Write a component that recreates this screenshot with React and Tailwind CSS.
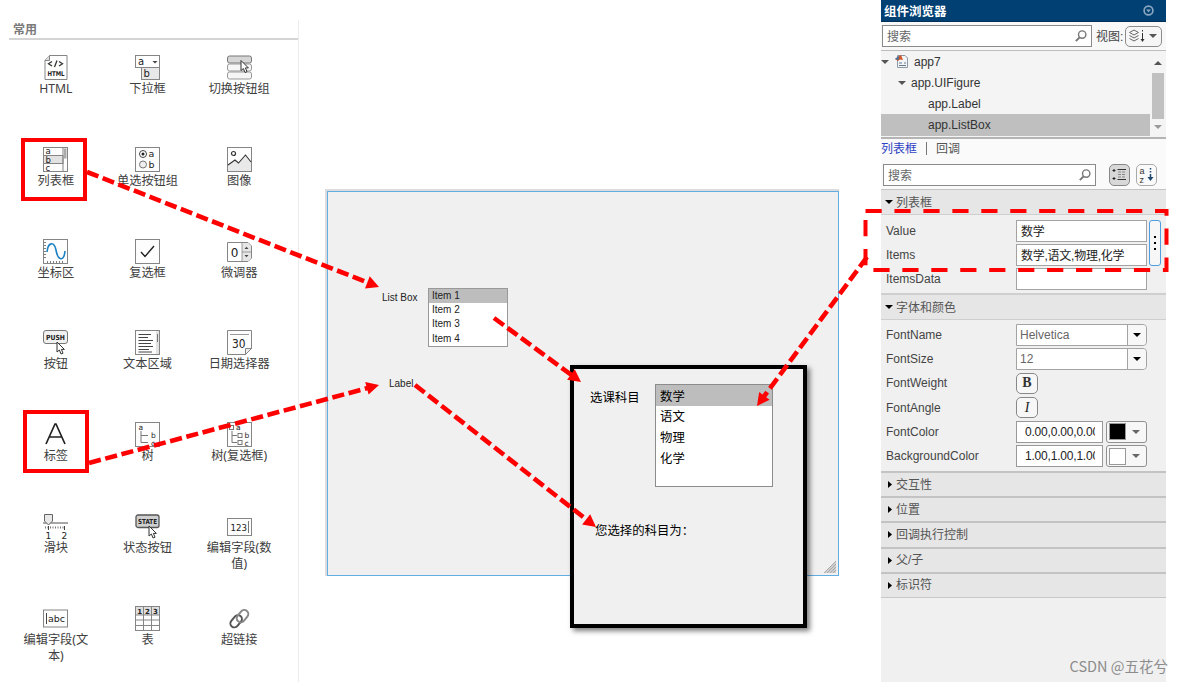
import React from 'react';

const Frame = ({ y = 0.5, h = 24 }) => (
    <rect x="0.5" y={y} width="24" height={h} fill="#fdfdfd" stroke="#858585" />
);

const Cursor = ({ x, y }) => (
    <path
        transform={`translate(${x} ${y})`}
        d="M0 0 V10 L2.4 8 L4 12 L6 11.2 L4.4 7.4 H7.4 Z"
        fill="#fff"
        stroke="#333"
        strokeWidth="1"
    />
);

const icons = {
    html: (
        <>
            <path d="M6.5 0.5 H24 V24.5 H2 V5.5 Z" fill="#fff" stroke="#858585" />
            <path d="M6.5 0.5 V5.5 H2" fill="#ddd" stroke="#858585" />
            <path d="M9 6.5 L5.5 8.8 L9 11 M16 6.5 L19.5 8.8 L16 11 M14 5.5 L11.5 12" fill="none" stroke="#333" strokeWidth="1.3" />
            <text x="4.5" y="21" fontSize="6.5" fontWeight="bold" textLength="17" lengthAdjust="spacingAndGlyphs">HTML</text>
        </>
    ),
    dropdown: (
        <>
            <rect x="0.5" y="0.5" width="24" height="12" fill="#fff" stroke="#858585" />
            <rect x="6.5" y="12.5" width="18" height="12" fill="#e8e8e8" stroke="#858585" />
            <text x="3" y="9.5" fontSize="10">a</text>
            <path d="M17.5 6 h5 l-2.5 2.5 Z" fill="#444" />
            <text x="8.5" y="22.3" fontSize="10">b</text>
        </>
    ),
    toggle: (
        <>
            <rect x="0.5" y="1" width="24" height="7" rx="2" fill="#d6d6d6" stroke="#777" />
            <rect x="0.5" y="9" width="24" height="7" rx="2" fill="#f6f6f6" stroke="#999" />
            <rect x="0.5" y="17" width="24" height="7" rx="2" fill="#f6f6f6" stroke="#999" />
            <Cursor x={14} y={5.5} />
        </>
    ),
    listbox: (
        <>
            <Frame />
            <rect x="0.5" y="8.5" width="19.5" height="8" fill="#e2e2e2" stroke="#858585" />
            <path d="M20 0.5 V24.5" stroke="#858585" />
            <rect x="21" y="1.5" width="2.5" height="10" fill="#aaa" />
            <g fontSize="8.5">
                <text x="2.5" y="7">a</text>
                <text x="2.5" y="15.7">b</text>
                <text x="2.5" y="23.7">c</text>
            </g>
        </>
    ),
    radio: (
        <>
            <Frame />
            <circle cx="8" cy="7" r="3.5" fill="#fff" stroke="#444" />
            <circle cx="8" cy="7" r="1.5" fill="#222" />
            <circle cx="8" cy="17.5" r="3.5" fill="#eee" stroke="#777" />
            <text x="13.5" y="10" fontSize="9.5">a</text>
            <text x="13.5" y="21" fontSize="9.5">b</text>
        </>
    ),
    image: (
        <>
            <Frame />
            <path d="M1 18 L8 13 L11.5 16 L18.5 8 L24 15 V24 H1 Z" fill="#e9e9e9" />
            <path d="M1 18 L8 13 L11.5 16 L18.5 8 L24 15" fill="none" stroke="#333" strokeWidth="1.1" />
            <circle cx="6.5" cy="6.5" r="2" fill="none" stroke="#333" strokeWidth="1.2" />
        </>
    ),
    axes: (
        <>
            <Frame />
            <path d="M2 3 V21" stroke="#555" strokeDasharray="1 2" strokeWidth="1.5" />
            <path d="M4 23 H22" stroke="#555" strokeDasharray="1 2" strokeWidth="1.5" />
            <path d="M4 13 C5 3 11 2 13 11 C15 22 21 23 22 12" fill="none" stroke="#1c82c4" strokeWidth="1.6" />
        </>
    ),
    checkbox: (
        <>
            <Frame />
            <path d="M6 13 L10 17.5 L19 7" fill="none" stroke="#222" strokeWidth="1.4" />
        </>
    ),
    spinner: (
        <>
            <path d="M0.5 3.5 H21 L24.5 7 V19 L21 22.5 H0.5 Z" fill="#fff" stroke="#858585" />
            <path d="M15 4 H21 L24 7 V19 L21 22 H15 Z" fill="#e6e6e6" />
            <path d="M15 4 V22 M15 13 H24" stroke="#858585" strokeWidth="0.8" />
            <text x="3.7" y="17.5" fontSize="12">0</text>
            <path d="M17.5 10 h4 l-2 -2.3 Z M17.5 16 h4 l-2 2.3 Z" fill="#444" />
        </>
    ),
    push: (
        <>
            <rect x="0.5" y="0.5" width="24" height="13" rx="2.5" fill="#f0f0f0" stroke="#777" />
            <text x="3" y="10" fontSize="7" fontWeight="bold" textLength="19" lengthAdjust="spacingAndGlyphs">PUSH</text>
            <Cursor x={14} y={12} />
        </>
    ),
    textarea: (
        <>
            <Frame />
            <path d="M3.5 4.5 H16 M3.5 7.5 H13 M3.5 10.5 H18 M3.5 13.5 H16 M3.5 16.5 H18 M3.5 19.5 H14 M3.5 22 H17" stroke="#444" />
            <rect x="21" y="1" width="3" height="23" fill="#e2e2e2" />
            <path d="M22.5 4 V12" stroke="#777" />
        </>
    ),
    date: (
        <>
            <path d="M0.5 0.5 H24.5 V18.5 L18.5 24.5 H0.5 Z" fill="#fdfdfd" stroke="#858585" />
            <path d="M18.5 24.5 V18.5 H24.5 Z" fill="#eee" stroke="#858585" />
            <path d="M3 4.5 H22" stroke="#999" />
            <text x="5" y="18" fontSize="12" textLength="13.5" lengthAdjust="spacingAndGlyphs">30</text>
        </>
    ),
    label: <path d="M3 22 L12 2 H13 L22 22 M6.5 15 H18.5" fill="none" stroke="#222" strokeWidth="1.7" />,
    tree: (
        <>
            <Frame />
            <path d="M6 9 V20.5 H13 M6 13.5 H13" fill="none" stroke="#777" />
            <g fontSize="7.5">
                <text x="3.5" y="7.5">a</text>
                <text x="16" y="15.5">b</text>
                <text x="16" y="23.6">c</text>
            </g>
        </>
    ),
    checktree: (
        <>
            <Frame />
            <path d="M5 9 V20.5 H10 M5 13.5 H10" fill="none" stroke="#777" />
            <g fill="#fff" stroke="#777">
                <rect x="2.5" y="3.5" width="4" height="4" />
                <rect x="11" y="11.5" width="4" height="4" />
                <rect x="11" y="18.5" width="4" height="4" />
            </g>
            <g fontSize="7.5">
                <text x="9" y="7.5">a</text>
                <text x="17.5" y="15.5">b</text>
                <text x="17.5" y="23.6">c</text>
            </g>
        </>
    ),
    slider: (
        <>
            <path d="M0 9 H25" stroke="#777" strokeWidth="1.3" />
            <path d="M1.5 0.5 H9.5 V7 L5.5 11 L1.5 7 Z" fill="#e8e8e8" stroke="#666" />
            <path d="M2 13.5 H22" stroke="#777" strokeDasharray="1 1.5" strokeWidth="2" />
            <path d="M5.5 12 V16 M21.5 12 V16" stroke="#444" />
            <text x="2.5" y="24.5" fontSize="9">1</text>
            <text x="18.5" y="24.5" fontSize="9">2</text>
        </>
    ),
    state: (
        <>
            <rect x="1" y="1" width="23" height="12.5" rx="2" fill="#cfcfcf" stroke="#555" strokeWidth="1.3" />
            <text x="3" y="10" fontSize="7" fontWeight="bold" textLength="19" lengthAdjust="spacingAndGlyphs">STATE</text>
            <Cursor x={14} y={12} />
        </>
    ),
    numeric: (
        <>
            <Frame y={4.5} h={17} />
            <text x="3.5" y="16.5" fontSize="9.5" textLength="16.5" lengthAdjust="spacingAndGlyphs">123</text>
            <path d="M21.5 7 V19" stroke="#777" />
        </>
    ),
    textfield: (
        <>
            <Frame y={4} h={17} />
            <path d="M3.5 7 V18" stroke="#444" />
            <text x="5" y="16" fontSize="9.5" textLength="17" lengthAdjust="spacingAndGlyphs">abc</text>
        </>
    ),
    table: (
        <>
            <Frame />
            <rect x="1" y="1" width="23" height="8" fill="#dedede" />
            <path d="M8.5 0.5 V24.5 M16.5 0.5 V24.5 M0.5 9 H24.5 M0.5 14 H24.5 M0.5 19.5 H24.5" stroke="#858585" />
            <g fontSize="7" fontWeight="bold">
                <text x="2.2" y="7.5">1</text>
                <text x="10" y="7.5">2</text>
                <text x="18" y="7.5">3</text>
            </g>
        </>
    ),
    link: (
        <g fill="none" strokeWidth="2" transform="rotate(-50 12.5 12.5)">
            <rect x="1.5" y="7.7" width="13.5" height="8" rx="4" stroke="#555" />
            <rect x="9.5" y="9.3" width="13.5" height="8" rx="4" stroke="#888" />
        </g>
    ),
};

const components = [
    ['html', 'HTML'], ['dropdown', '下拉框'], ['toggle', '切换按钮组'],
    ['listbox', '列表框'], ['radio', '单选按钮组'], ['image', '图像'],
    ['axes', '坐标区'], ['checkbox', '复选框'], ['spinner', '微调器'],
    ['push', '按钮'], ['textarea', '文本区域'], ['date', '日期选择器'],
    ['label', '标签'], ['tree', '树'], ['checktree', '树(复选框)'],
    ['slider', '滑块'], ['state', '状态按钮'], ['numeric', '编辑字段(数值)'],
    ['textfield', '编辑字段(文本)'], ['table', '表'], ['link', '超链接'],
];

const Palette = () => (
    <aside className="mt-5 w-[299px] shrink-0 border-r border-[#ececec]">
        <h2 className="ml-[9px] h-5 border-b-2 border-[#d4d4d4] pt-px pl-1 text-xs leading-[19px] font-bold text-[#7a7a7a]">常用</h2>
        <div className="ml-[10px] grid w-[275px] auto-rows-[91.8px] grid-cols-3 pt-[15px]">
            {components.map(([icon, name]) => (
                <div key={icon} className="flex flex-col items-center">
                    <svg className="h-[25px] w-[25px] shrink-0 overflow-visible font-['DejaVu_Sans',sans-serif]" viewBox="0 0 25 25" fill="#222">{icons[icon]}</svg>
                    <span className="mt-px w-[70px] text-center font-['Noto_Sans','Noto_Sans_CJK_SC',sans-serif] text-[12.2px] leading-[16.5px] text-[#404040]">{name}</span>
                </div>
            ))}
        </div>
    </aside>
);

const DesignCanvas = () => (
    <main className="relative flex-1">
        <div className="absolute top-[189px] left-[26px] h-[387px] w-[514px] border-t-2 border-l-2 border-[#dcdcdc]">
            <div className="relative h-full w-full border border-[#62aee4] bg-[#f0f0f0] text-[10px] text-[#222]">
                <span className="absolute top-[99px] left-[54px] leading-[14px]">List Box</span>
                <ul className="absolute top-[96px] left-[100px] h-[59px] w-[80px] border border-[#999] bg-white leading-[14.2px]">
                    <li className="bg-[#bdbdbd] pl-[3px]">Item 1</li>
                    <li className="pl-[3px]">Item 2</li>
                    <li className="pl-[3px]">Item 3</li>
                    <li className="pl-[3px]">Item 4</li>
                </ul>
                <span className="absolute top-[185px] left-[61px] leading-[14px]">Label</span>
                <svg className="absolute right-[2px] bottom-[2px] h-3 w-3" viewBox="0 0 12 12">
                    <path d="M12 0 V12 H0 Z" fill="#d0d0d0" />
                    <path d="M0 12 L12 0 M3 12 L12 3 M6 12 L12 6 M9 12 L12 9" stroke="#a8a8a8" />
                </svg>
            </div>
        </div>
        <div className="absolute top-[365px] left-[271px] h-[263px] w-[237px] border-4 border-black bg-[#f0f0f0] text-[12.4px] text-black shadow-[3px_3px_5px_rgba(0,0,0,0.5)]">
            <span className="absolute top-5 left-4 leading-[18px]">选课科目</span>
            <ul className="absolute top-[15px] left-[81px] h-[103px] w-[118px] border border-[#8c8c8c] bg-white leading-[18px]">
                <li className="bg-[#bdbdbd] pt-[2.7px] pl-1">数学</li>
                <li className="pt-[2.7px] pl-1">语文</li>
                <li className="pt-[2.7px] pl-1">物理</li>
                <li className="pt-[2.7px] pl-1">化学</li>
            </ul>
            <span className="absolute top-[153px] left-[21px] leading-[18px] whitespace-nowrap">您选择的科目为：</span>
        </div>
    </main>
);

const Caret = ({ className = '' }) => (
    <svg className={`h-1 w-2 shrink-0 ${className}`} viewBox="0 0 8 4" fill="currentColor"><path d="M0 0 H8 L4 4 Z" /></svg>
);

const Magnifier = () => (
    <svg className="h-3 w-3" viewBox="0 0 12 12" fill="none" stroke="#777" strokeWidth="1.4">
        <circle cx="7.2" cy="4.6" r="3.7" />
        <path d="M4.5 7.5 L0.8 11.2" strokeWidth="1.8" />
    </svg>
);

const SearchBox = ({ className }) => (
    <div className={`flex h-[22px] items-center justify-between border border-[#8a8a8a] bg-white pr-1 pl-1 text-xs text-[#666] ${className}`}>
        <span className="pt-[2px]">搜索</span>
        <Magnifier />
    </div>
);

const Row = ({ name, children }) => (
    <div className="flex h-[24.2px] items-center">
        <span className="w-[130px] shrink-0 text-xs text-[#444]">{name}</span>
        {children}
    </div>
);

const Input = ({ children }) => (
    <div className="h-[22px] w-[131px] border border-[#a3a3a3] bg-white pt-px pl-1 text-xs leading-5 tracking-[-0.25px] whitespace-nowrap text-[#222]">{children}</div>
);

const Combo = ({ children }) => (
    <div className="flex h-[22px] w-[131px] items-center rounded-r-[4px] border border-[#a3a3a3] bg-white text-xs">
        <span className="flex-1 pl-[3px] text-[#666]">{children}</span>
        <span className="flex h-full w-[19px] items-center justify-center rounded-r-[4px] border-l border-[#a3a3a3] bg-[#f7f7f7] text-black"><Caret /></span>
    </div>
);

const ColorRow = ({ name, value, swatch }) => (
    <Row name={name}>
        <div className="h-[22px] w-[87px] border border-[#999] bg-white pr-[7px] pl-2 text-xs leading-5 text-[#222]">
            <div className="overflow-hidden tracking-[-0.2px] whitespace-nowrap">{value}</div>
        </div>
        <div className="ml-[3px] flex h-[22px] w-[41px] items-center rounded-[3px] border border-[#909090] bg-[#f7f7f7] pl-[2px] text-[#666]">
            <span className={`h-[17px] w-[17px] border border-[#999] ${swatch}`} />
            <Caret className="ml-[6px]" />
        </div>
    </Row>
);

const OpenHeader = ({ children }) => (
    <div className="flex h-[25px] items-center border-b border-[#cfcfcf] bg-[#e6e6e6] pl-1 text-xs text-[#555]">
        <Caret className="mr-[3px] text-black" />
        <span className="pt-px">{children}</span>
    </div>
);

const closedSections = ['交互性', '位置', '回调执行控制', '父/子', '标识符'];

const Inspector = () => (
    <aside className="mr-[18px] flex w-[285px] shrink-0 flex-col bg-[#f0f0f0]">
        <div className="flex h-[22px] items-center justify-between border-b border-[#003058] bg-[#004073] pr-3 pl-[3px] text-[12.5px] font-bold text-white">
            <span className="pt-[3px]">组件浏览器</span>
            <svg className="h-[11px] w-[11px]" viewBox="0 0 10 10">
                <circle cx="5" cy="5" r="4" fill="none" stroke="#8aa6bf" strokeWidth="1.5" />
                <path d="M2.8 4 H7.2 L5 6.8 Z" fill="#8aa6bf" />
            </svg>
        </div>
        <div className="flex h-[29px] items-center border-b border-[#bdbdbd] bg-[#f8f8f8] pl-px text-xs text-[#444]">
            <SearchBox className="w-[210px]" />
            <span className="ml-1 w-[29px] pt-[2px] whitespace-nowrap">视图:</span>
            <span className="flex h-[21px] w-[37px] items-center rounded-[5px] border border-[#8c8c8c] bg-[#f6f6f6] pl-[3px]">
                <svg className="h-[14px] w-4" viewBox="0 0 16 14" fill="none" stroke="#666">
                    <path d="M0.5 3.5 L5 1 L9.5 3.5 L5 6 Z M0.5 6.5 L5 9 L9.5 6.5 M0.5 9.5 L5 12 L9.5 9.5" />
                    <path d="M13.5 1 V2.5 M13.5 4 V12" stroke="#333" />
                    <path d="M11.5 10 H15.5 L13.5 13 Z" fill="#333" stroke="none" />
                </svg>
                <Caret className="ml-1 text-[#555]" />
            </span>
        </div>
        <div className="flex h-[88px] border-b-2 border-[#b4b4b4] bg-[#f4f4f4] text-xs text-[#333]">
            <div className="w-[269px] leading-[22px]">
                <div className="flex h-[21px] items-center">
                    <Caret className="text-[#555]" />
                    <svg className="mr-[6px] ml-[6px] h-[13px] w-[13px]" viewBox="0 0 13 13">
                        <path d="M2.5 0.5 H10 L12.5 3 V12.5 H2.5 Z" fill="#f3f6f9" stroke="#8b98a5" />
                        <path d="M4 8 H7 M4 10.5 H11 M9 8 H11" stroke="#667888" />
                        <path d="M0 4 L4 1 L6 0 L8 5 L5 4.5 L3 6 Z" fill="#d4552a" />
                        <path d="M0 4 L4 1 L3.5 5 Z" fill="#3777a8" />
                    </svg>
                    app7
                </div>
                <div className="flex h-[21px] items-center pl-[17px]">
                    <Caret className="mr-[5px] text-[#555]" />
                    app.UIFigure
                </div>
                <div className="h-[21px] pl-[47px]">app.Label</div>
                <div className="h-[22px] bg-[#bfbfbf] pl-[47px]">app.ListBox</div>
            </div>
            <div className="flex flex-1 flex-col items-center pt-[10px] text-[#555]">
                <Caret className="rotate-180" />
                <div className="mt-[8px] h-[46px] w-3 bg-[#c0c0c0]" />
                <Caret className="mt-[6px] text-[#999]" />
            </div>
        </div>
        <div className="flex h-[21px] items-center bg-[#fafafa] pb-[2px] text-xs text-[#555]">
            <span className="text-[#2e43c4]">列表框</span>
            <span className="mx-[9px] h-[13px] w-px bg-[#777]" />
            <span>回调</span>
        </div>
        <div className="flex h-[30px] items-center border-b border-[#c4c4c4] bg-[#fafafa] pl-[2px]">
            <SearchBox className="w-[213px]" />
            <span className="ml-[13px] flex h-[22px] w-[21px] items-center justify-center rounded-[5px] border border-[#888] bg-[#d8d8d8]">
                <svg className="h-[15px] w-[15px]" viewBox="0 0 15 15" fill="none" stroke="#666">
                    <path d="M0.5 3.5 H3.5 M2 2 V5 M0.5 11.5 H3.5 M2 10 V13" stroke="#222" />
                    <path d="M5.5 2.5 H14 M5.5 12.5 H14" stroke="#333" />
                    <path d="M6 5 H14 M6 7.5 H14 M6 10 H14" stroke="#888" strokeDasharray="3 1" />
                </svg>
            </span>
            <span className="ml-[6px] flex h-[22px] w-[21px] items-center justify-center rounded-[5px] border border-[#aaa] bg-[#fafafa]">
                <svg className="h-[18px] w-[15px] overflow-visible" viewBox="0 0 15 18" fill="#333">
                    <text x="0.5" y="7.5" fontSize="9">a</text>
                    <text x="0.5" y="16.5" fontSize="9">z</text>
                    <path d="M11.5 2 V12" stroke="#1d4872" strokeWidth="1.5" strokeDasharray="1.5 1.5 1.5 1.5 6" />
                    <path d="M8.5 11 H14.5 L11.5 15 Z" fill="#1d4872" />
                </svg>
            </span>
        </div>
        <OpenHeader>列表框</OpenHeader>
        <div className="flex h-20 border-b-2 border-[#cfcfcf] pt-[3.5px] pl-[5px]">
            <div>
                <Row name="Value"><Input>数学</Input></Row>
                <Row name="Items"><Input>数学,语文,物理,化学</Input></Row>
                <Row name="ItemsData"><Input /></Row>
            </div>
            <div className="mt-[1.5px] ml-[2px] flex h-[46px] w-3 flex-col items-center justify-center gap-1 rounded-[3px] border border-[#4e9de0] bg-[#f7f7f7]">
                <i className="h-[2px] w-[2px] bg-black" />
                <i className="h-[2px] w-[2px] bg-black" />
                <i className="h-[2px] w-[2px] bg-black" />
            </div>
        </div>
        <OpenHeader>字体和颜色</OpenHeader>
        <div className="h-[151px] pt-[3px] pl-[5px]">
            <Row name="FontName"><Combo>Helvetica</Combo></Row>
            <Row name="FontSize"><Combo>12</Combo></Row>
            <Row name="FontWeight">
                <span className="flex h-[21px] w-[22px] items-center justify-center rounded-[5px] border border-[#888] bg-[#f7f7f7] font-['Liberation_Serif',serif] text-sm font-bold text-[#333]">B</span>
            </Row>
            <Row name="FontAngle">
                <span className="flex h-[21px] w-[22px] items-center justify-center rounded-[5px] border border-[#888] bg-[#f7f7f7] font-['Liberation_Serif',serif] text-sm text-[#222] italic">I</span>
            </Row>
            <ColorRow name="FontColor" value="0.00,0.00,0.00" swatch="bg-black" />
            <ColorRow name="BackgroundColor" value="1.00,1.00,1.00" swatch="bg-white" />
        </div>
        {closedSections.map((name) => (
            <div key={name} className="flex h-[25.2px] items-center border-t-2 border-[#c3c3c3] bg-[#e6e6e6] pl-[7px] text-xs text-[#555]">
                <svg className="mr-1 h-[7px] w-1" viewBox="0 0 4 7"><path d="M0 0 V7 L4 3.5 Z" /></svg>
                {name}
            </div>
        ))}
        <div className="border-t border-[#c8c8c8]" />
    </aside>
);

const Arrow = ({ x1, y1, x2, y2 }) => {
    const length = Math.hypot(x2 - x1, y2 - y1);
    const angle = (Math.atan2(y2 - y1, x2 - x1) * 180) / Math.PI;

    return (
        <g transform={`translate(${x1} ${y1}) rotate(${angle})`}>
            <path d={`M0 0 H${length - 10}`} stroke="#f00" strokeWidth="4.6" strokeDasharray="12.2 4.6" />
            <path d={`M${length} 0 l-12.5 -6.5 v13 Z`} fill="#f00" />
        </g>
    );
};

const Annotations = () => (
    <svg className="pointer-events-none absolute inset-0 h-full w-full" viewBox="0 0 1184 682">
        <g fill="none" stroke="#f00" strokeWidth="4">
            <rect x="23" y="140" width="62" height="59" />
            <rect x="25" y="412" width="62" height="59" />
            <rect x="865.5" y="211" width="301" height="59" strokeDasharray="16.2 12.75" />
        </g>
        <Arrow x1={87} y1={172} x2={379} y2={287} />
        <Arrow x1={89} y1={463} x2={379} y2={385} />
        <Arrow x1={494} y1={318} x2={581} y2={382} />
        <Arrow x1={415} y1={385} x2={596} y2={527} />
        <Arrow x1={867} y1={257} x2={757} y2={406} />
    </svg>
);

const App = () => (
    <div className="relative flex h-[682px] w-[1184px] overflow-hidden bg-white font-['Liberation_Sans','Noto_Sans_CJK_SC',sans-serif]">
        <Palette />
        <DesignCanvas />
        <Inspector />
        <Annotations />
        <span className="absolute right-4 bottom-[6px] font-['Noto_Sans_CJK_SC',sans-serif] text-[14.5px] leading-5 whitespace-nowrap text-[#8c8c8c]">CSDN @五花兮</span>
    </div>
);

export default App;
